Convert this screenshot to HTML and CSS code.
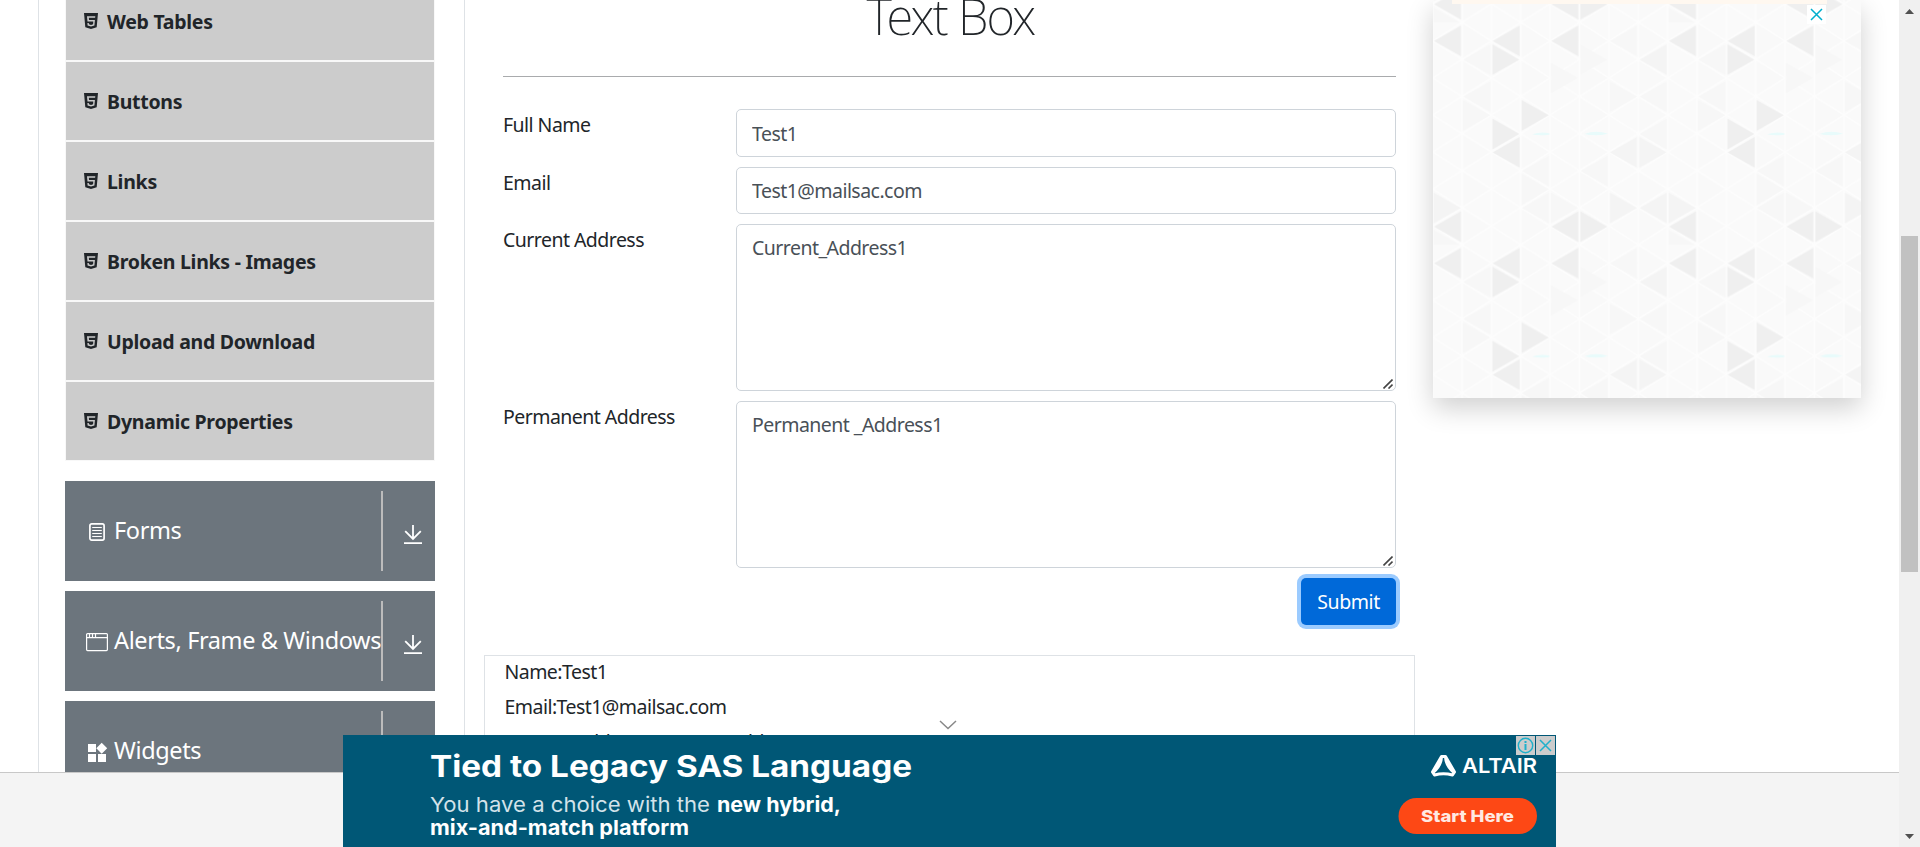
FILE: index.html
```
<!DOCTYPE html>
<html lang="en">
<head>
<meta charset="utf-8">
<title>Text Box</title>
<link rel="stylesheet" href="styles.css">
</head>
<body>
<svg class="defs" width="0" height="0" aria-hidden="true">
  <symbol id="html5" viewBox="0 0 14 16"><path fill="currentColor" fill-rule="evenodd" d="M0 0H14L12.7 14.2 7 16 1.3 14.2ZM3 3.2 3.5 8.6H9.3L9.1 11.2 7 11.9 4.9 11.2 4.8 10H3.4L3.6 12.4 7 13.5 10.4 12.4 10.9 7.1H5L4.8 4.8H11.1L11.3 3.2Z"/></symbol>
  <symbol id="down" viewBox="0 0 18 20"><path fill="none" stroke="currentColor" stroke-width="1.8" d="M9 0V13.6M1.2 6.2 9 14 16.8 6.2M0 18.1H18"/></symbol>
  <symbol id="grip" viewBox="0 0 10 10"><path fill="none" stroke="#444" stroke-width="1.6" d="M.5 9.5 9.5 .5M5.500 9.500 9.500 5.500"/></symbol>
</svg>
<div class="page">
  <div class="view">
    <div class="content">
      <aside class="sidebar">
        <ul class="menu">
          <li><svg class="h5"><use href="#html5"/></svg>Web Tables</li>
          <li><svg class="h5"><use href="#html5"/></svg>Buttons</li>
          <li><svg class="h5"><use href="#html5"/></svg>Links</li>
          <li><svg class="h5"><use href="#html5"/></svg>Broken Links - Images</li>
          <li><svg class="h5"><use href="#html5"/></svg>Upload and Download</li>
          <li><svg class="h5"><use href="#html5"/></svg>Dynamic Properties</li>
        </ul>
        <div class="group">
          <svg class="gi" viewBox="0 0 22 20"><rect x="3.9" y="1.9" width="14.2" height="16.2" rx="1.8" fill="none" stroke="#fff" stroke-width="1.7"/><path stroke="#fff" stroke-width="1.1" d="M6.2 5.5H15.8M6.2 8.5H15.8M6.2 11.5H15.8M6.2 14.5H15.8"/></svg>
          <span class="gt">Forms</span><span class="arrow"><svg class="dn"><use href="#down"/></svg></span>
        </div>
        <div class="group">
          <svg class="gi" viewBox="0 0 22 20"><rect x=".6" y="1.6" width="20.8" height="17" rx="1" fill="none" stroke="#fff" stroke-width="1.2"/><path stroke="#fff" stroke-width="1.2" d="M1 5.6H21M3.5 2V5M6.5 2V5M9.5 2V5"/></svg>
          <span class="gt">Alerts, Frame &amp; Windows</span><span class="arrow"><svg class="dn"><use href="#down"/></svg></span>
        </div>
        <div class="group">
          <svg class="gi" viewBox="0 0 22 20"><path fill="#fff" d="M2 2H10V10H2ZM2 12H10V20H2ZM12 12H20V20H12ZM15.7 .8 21.2 6.2 15.7 11.7 10.3 6.2Z"/></svg>
          <span class="gt">Widgets</span><span class="arrow"><svg class="dn"><use href="#down"/></svg></span>
        </div>
      </aside>
      <main class="main">
        <h1>Text Box</h1>
        <form class="form">
          <label>Full Name</label><input type="text" value="Test1">
          <label>Email</label><input type="text" value="Test1@mailsac.com">
          <label>Current Address</label><div class="area"><textarea>Current_Address1</textarea><svg class="grip"><use href="#grip"/></svg></div>
          <label>Permanent Address</label><div class="area"><textarea>Permanent _Address1</textarea><svg class="grip"><use href="#grip"/></svg></div>
          <button type="button" class="submit">Submit</button>
        </form>
        <div class="output">
          <p>Name:Test1</p>
          <p>Email:Test1@mailsac.com</p>
          <p>Current Address :Current_Address1</p>
        </div>
      </main>
      <aside class="side-ad">
        <svg class="tiles" viewBox="39 0 1284 1194">
          <defs>
            <pattern id="grid" x="38" y="67" width="176.25" height="111.2" patternUnits="userSpaceOnUse">
              <rect width="177" height="112" fill="#fafafa"/>
              <path fill="#f9f9f9" d="M88 0 176 55.6 88 111.2Z"/>
              <path fill="none" stroke="#fdfdfd" stroke-width="5" d="M0 55.6 88.1 0 176.2 55.6 88.1 111.2ZM88.1 0V111.2M0 0V112M176.2 0V112"/>
            </pattern>
            <path id="l" d="M4 0 85 -46V46Z"/>
            <path id="r" d="M-4 0 -85 -46V46Z"/>
            <pattern id="shade" x="38" y="67" width="705" height="667" patternUnits="userSpaceOnUse">
              <g fill="#efefef">
                <use href="#l" x="0" y="56"/><use href="#l" x="176" y="56"/><use href="#r" x="264" y="112"/><use href="#l" x="352" y="56"/>
                <use href="#r" x="352" y="279"/><use href="#r" x="264" y="335"/><use href="#l" x="176" y="390"/>
                <use href="#l" x="0" y="613"/><use href="#l" x="352" y="613"/><use href="#r" x="528" y="613"/>
              </g>
              <g fill="#f4f4f4">
                <use href="#l" x="617" y="112"/><use href="#l" x="528" y="390"/><use href="#r" x="705" y="390"/><use href="#r" x="617" y="557"/><use href="#l" x="617" y="557"/><use href="#r" x="88" y="557"/>
              </g>
              <g fill="#f7f7f7">
                <use href="#l" x="88" y="112"/><use href="#r" x="528" y="112"/><use href="#l" x="88" y="223"/><use href="#l" x="617" y="223"/><use href="#l" x="617" y="335"/>
                <use href="#r" x="617" y="223"/><use href="#r" x="440" y="167"/><use href="#r" x="176" y="279"/><use href="#l" x="264" y="557"/><use href="#r" x="440" y="557"/>
                <use href="#r" x="88" y="669"/><use href="#r" x="352" y="501"/><use href="#l" x="440" y="446"/><use href="#l" x="264" y="446"/><use href="#l" x="528" y="56"/>
              </g>
              <path fill="#e8fbfb" d="M298 336Q325 327 350 333V337Q320 341 298 336ZM455 335Q490 322 526 334 490 343 455 335Z"/>
            </pattern>
          </defs>
          <rect x="39" width="1284" height="1194" fill="url(#grid)"/>
          <rect x="39" width="1284" height="1194" fill="url(#shade)"/>
        </svg>
        <div class="strip"></div>
        <span class="close"><svg viewBox="0 0 19 19"><path stroke="#00aecd" stroke-width="1.5" d="M4 4 15 15M15 4 4 15"/></svg></span>
      </aside>
    </div>
    <footer class="footer"></footer>
    <svg class="chevron" viewBox="0 0 18 10"><path fill="none" stroke="#888" stroke-width="1.5" d="M1 1 9 8.5 17 1"/></svg>
    <div class="banner">
      <svg viewBox="343 735 1213 112">
        <g fill="#fff" font-family="Inter, sans-serif">
          <text x="430" y="777" font-size="30" font-weight="700" textLength="482" lengthAdjust="spacingAndGlyphs">Tied to Legacy SAS Language</text>
          <text x="430" y="811.5" font-size="20.5" fill="#d3e3ea" textLength="280" lengthAdjust="spacingAndGlyphs">You have a choice with the</text>
          <text x="717" y="811.5" font-size="20.5" font-weight="700" textLength="124" lengthAdjust="spacingAndGlyphs">new hybrid,</text>
          <text x="430" y="835" font-size="20.5" font-weight="700" textLength="259" lengthAdjust="spacingAndGlyphs">mix-and-match platform</text>
          <text x="1462" y="773" font-size="19.5" font-weight="600" textLength="75" lengthAdjust="spacingAndGlyphs">ALTAIR</text>
        </g>
        <path fill="none" stroke="#fff" stroke-width="3" stroke-linejoin="round" d="M1441.5 756.5H1445.5L1454.5 772 1452.5 775Q1443.5 772.5 1434.5 775L1432.5 772ZM1433 772.5Q1441 766 1441.5 757M1445.5 757Q1446 766 1454 772.5"/>
        <rect x="1398.5" y="798" width="138.5" height="36" rx="18" fill="#fd4815"/>
        <text x="1421" y="822" font-family="Inter, sans-serif" font-size="16.5" font-weight="800" fill="#ffe9e2" textLength="93" lengthAdjust="spacingAndGlyphs">Start Here</text>
        <rect x="1516" y="736" width="19" height="19" fill="#ccc"/><rect x="1536" y="736" width="19" height="19" fill="#ccc"/>
        <circle cx="1525.5" cy="745.5" r="7.2" fill="none" stroke="#1fb0cb" stroke-width="1.4"/>
        <path stroke="#1fb0cb" stroke-width="2" d="M1525.5 744V750M1525.5 741V743"/>
        <path stroke="#1fb0cb" stroke-width="1.5" d="M1540 740 1551 751M1551 740 1540 751"/>
      </svg>
    </div>
  </div>
  <div class="scrollbar">
    <svg class="sa" viewBox="0 0 9 5"><path fill="#505050" d="M0 5 4.5 0 9 5Z"/></svg>
    <div class="thumb"></div>
    <svg class="sa" viewBox="0 0 9 5"><path fill="#505050" d="M0 0 4.5 5 9 0Z"/></svg>
  </div>
</div>
</body>
</html>
```
FILE: styles.css
```
* { box-sizing: border-box; }
body {
  margin: 0;
  overflow: hidden;
  background: #fff;
  color: #212529;
  font: 19.5px/30px "Noto Sans", "Open Sans", sans-serif;
  letter-spacing: -0.54px;
}
svg { display: block; }
.defs { position: absolute; }
.page { display: flex; height: 847px; overflow: hidden; }
.view { position: relative; flex: 1; height: 847px; overflow: hidden; display: flex; flex-direction: column; }
.content { display: flex; height: 772px; margin-left: 38px; border-left: 1px solid #dee2e6; overflow: hidden; }
.footer { height: 75px; background: #f4f4f4; border-top: 1px solid #c8c8c8; }

/* Sidebar */
.sidebar { width: 426px; padding: 0 29px 0 26px; border-right: 1px solid #dee2e6; flex: none; }
.menu {
  list-style: none;
  margin: -20px 0 20px;
  padding: 1px;
  background: #f8f8f8;
  display: grid;
  gap: 2px;
  font-weight: 700;
  letter-spacing: -0.28px;
}
.menu li { height: 78px; padding: 25px 0 0 18px; background: #ccc; display: flex; white-space: nowrap; }
.menu li:first-child { height: 79px; padding-top: 26px; }
.h5 { width: 14px; height: 16px; margin: 6px 9px 0 0; }
.group {
  height: 100px;
  margin-bottom: 10px;
  padding: 10px 0;
  background: #6c757d;
  color: #fff;
  display: flex;
  font-size: 23.5px;
  letter-spacing: -0.38px;
  overflow: hidden;
}
.gi { width: 22px; height: 20px; margin: 31px 6px 0 21px; flex: none; }
.gt { width: 267px; flex: none; padding-top: 24px; white-space: nowrap; }
.arrow { flex: 1; border-left: 2px solid #bcbcbc; padding: 34px 0 0 21px; }
.dn { width: 18px; height: 20px; }

/* Form */
.main { width: 931px; margin-left: 19px; flex: none; }
h1 {
  margin: 0 19px 32px;
  height: 77px;
  border-bottom: 1px solid #a9abad;
  text-align: center;
  font-size: 49px;
  line-height: 32px;
  font-weight: 250;
  letter-spacing: -1.8px;
  padding-left: 2px;
}
.form { margin: 0 19px; display: grid; grid-template-columns: 233px 660px; gap: 10px 0; }
label { padding-top: 1px; }
input, textarea {
  display: block;
  width: 660px;
  height: 47.5px;
  margin: 0;
  padding: 8px 15px 7px;
  border: 1px solid #ced4da;
  border-radius: 5px;
  background: #fff;
  color: #495057;
  font: inherit;
  letter-spacing: inherit;
}
textarea { height: 167px; padding-top: 7.5px; resize: none; }
.area { position: relative; }
.grip { position: absolute; right: 3px; bottom: 2px; width: 10px; height: 10px; }
.submit {
  grid-column: 2;
  justify-self: end;
  width: 95px;
  height: 47px;
  padding: 0;
  border: 0;
  border-radius: 5px;
  background: #0069d9;
  color: #fff;
  font: inherit;
  letter-spacing: -0.4px;
  box-shadow: 0 0 0 4px #9bcbff;
}
.output { margin-top: 30px; height: 180px; border: 1px solid #dee2e6; padding: 0.5px 19.5px; }
.output p { margin: 0 0 5px; }

/* Advertisement beside the form */
.side-ad { position: relative; width: 428px; height: 398px; margin-left: 18px; flex: none; box-shadow: 0 10px 25px rgba(0, 0, 0, .19); }
.tiles { width: 428px; height: 398px; }
.strip { position: absolute; left: 19px; top: 0; width: 375px; height: 4px; background: #fff8f0; }
.close { position: absolute; left: 374px; top: 5px; width: 19px; height: 19px; background: #fff; }

/* Anchored banner */
.chevron { position: absolute; left: 939px; top: 720px; width: 18px; height: 10px; }
.banner { position: absolute; left: 343px; top: 735px; width: 1213px; height: 112px; background: #005776; letter-spacing: 0; }

.scrollbar { width: 21px; padding: 9px 2px 8px; background: #f0f0f0; display: flex; flex-direction: column; align-items: center; }
.sa { width: 9px; height: 5px; }
.thumb { width: 17px; height: 336px; margin: 222px 0 auto; background: #c1c1c1; }
```
